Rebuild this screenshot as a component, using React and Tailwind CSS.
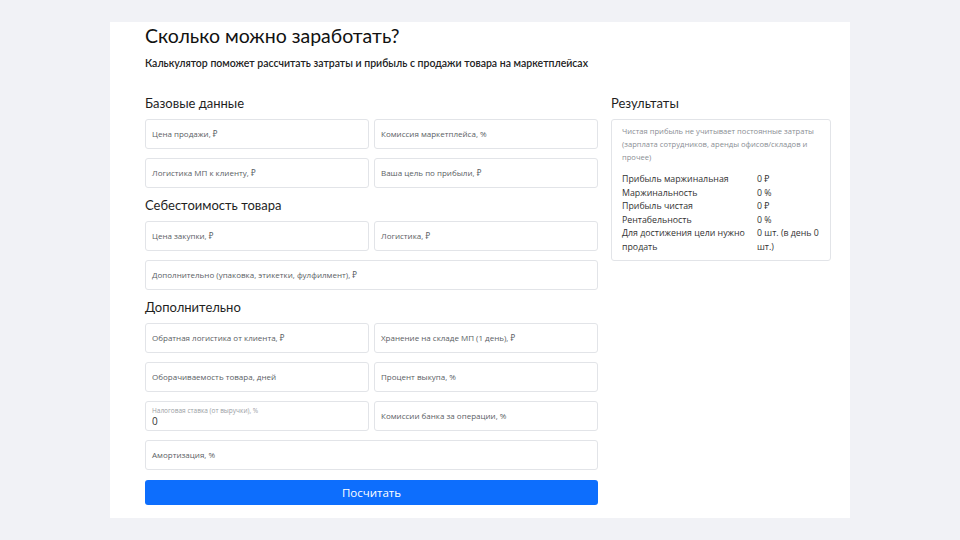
const head = { fontFamily: 'Lato, "Noto Sans", sans-serif' };
const body = { fontFamily: '"Open Sans", "Noto Sans", sans-serif' };

const Field = ({ label, value, wide }) => (
  <div
    className={`h-[30px] rounded-[3px] border border-[#e2e4e8] bg-white px-[6px] flex flex-col justify-center ${wide ? 'col-span-2' : ''}`}
  >
    {value !== undefined ? (
      <>
        <div className="text-[6.5px] leading-[8px] text-[#9a9ea4] mt-[2px]">{label}</div>
        <div className="text-[10px] leading-[12px] text-[#333]">{value}</div>
      </>
    ) : (
      <div className="text-[8px] leading-[10px] text-[#5a5e64]">{label}</div>
    )}
  </div>
);

const Section = ({ title, children, className = '' }) => (
  <div className={className}>
    <h3 className="text-[13px] leading-[16px] text-[#1f1f1f] mb-[8px]" style={head}>{title}</h3>
    <div className="grid grid-cols-2 gap-x-[5px] gap-y-[9px]">{children}</div>
  </div>
);

const results = [
  ['Прибыль маржинальная', '0 ₽'],
  ['Маржинальность', '0 %'],
  ['Прибыль чистая', '0 ₽'],
  ['Рентабельность', '0 %'],
  ['Для достижения цели нужно продать', '0 шт. (в день 0 шт.)'],
];

export default function App() {
  return (
    <div className="min-h-[540px] bg-[#f1f2f6] pt-[22px]" style={body}>
      <div className="ml-[110px] w-[740px] h-[496px] bg-white pl-[35px]">
        <h1 className="text-[19.5px] leading-[28px] text-[#111]" style={head}>Сколько можно заработать?</h1>
        <p className="text-[10.5px] leading-[14px] mt-[6px] text-[#222] font-semibold" style={head}>
          Калькулятор поможет рассчитать затраты и прибыль с продажи товара на маркетплейсах
        </p>

        <div className="flex gap-[13px] mt-[25px]">
          <div className="w-[453px]">
            <Section title="Базовые данные">
              <Field label="Цена продажи, ₽" />
              <Field label="Комиссия маркетплейса, %" />
              <Field label="Логистика МП к клиенту, ₽" />
              <Field label="Ваша цель по прибыли, ₽" />
            </Section>
            <Section title="Себестоимость товара" className="mt-[9px]">
              <Field label="Цена закупки, ₽" />
              <Field label="Логистика, ₽" />
              <Field label="Дополнительно (упаковка, этикетки, фулфилмент), ₽" wide />
            </Section>
            <Section title="Дополнительно" className="mt-[9px]">
              <Field label="Обратная логистика от клиента, ₽" />
              <Field label="Хранение на складе МП (1 день), ₽" />
              <Field label="Оборачиваемость товара, дней" />
              <Field label="Процент выкупа, %" />
              <Field label="Налоговая ставка (от выручки), %" value="0" />
              <Field label="Комиссии банка за операции, %" />
              <Field label="Амортизация, %" wide />
            </Section>
            <button className="mt-[10px] w-full h-[25px] rounded-[3px] bg-[#0d6efd] text-white text-[11.5px]">
              Посчитать
            </button>
          </div>

          <div className="w-[220px]">
            <h3 className="text-[13px] leading-[16px] text-[#1f1f1f] mb-[8px]" style={head}>Результаты</h3>
            <div className="rounded-[3px] border border-[#e2e4e8] pl-[10px] pr-[6px] pt-[5px] pb-[6px]">
              <p className="text-[7.6px] leading-[13px] text-[#8a8e94] pr-[4px]">
                Чистая прибыль не учитывает постоянные затраты (зарплата сотрудников, аренды офисов/складов и прочее)
              </p>
              <div className="mt-[9px] text-[8.8px] leading-[13.5px] text-[#333]">
                {results.map(([k, v]) => (
                  <div key={k} className="flex">
                    <div className="w-[135px] pr-[4px]">{k}</div>
                    <div className="flex-1">{v}</div>
                  </div>
                ))}
              </div>
            </div>
          </div>
        </div>
      </div>
    </div>
  );
}
